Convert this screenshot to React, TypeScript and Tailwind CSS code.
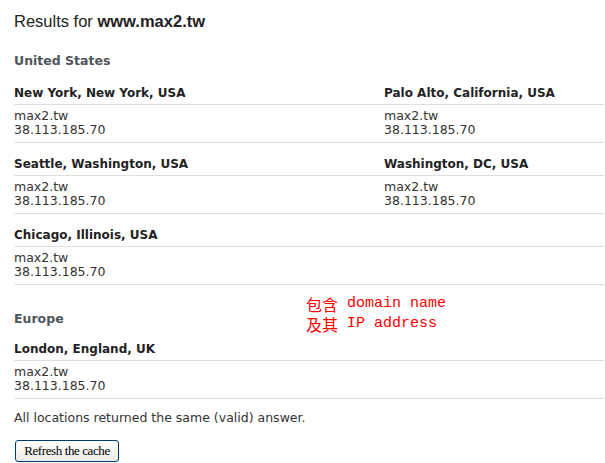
import React from "react";

type Location = { place: string; host: string; ip: string };

const usLocations: Location[] = [
  { place: "New York, New York, USA", host: "max2.tw", ip: "38.113.185.70" },
  { place: "Palo Alto, California, USA", host: "max2.tw", ip: "38.113.185.70" },
  { place: "Seattle, Washington, USA", host: "max2.tw", ip: "38.113.185.70" },
  { place: "Washington, DC, USA", host: "max2.tw", ip: "38.113.185.70" },
  { place: "Chicago, Illinois, USA", host: "max2.tw", ip: "38.113.185.70" },
];

const euLocations: Location[] = [
  { place: "London, England, UK", host: "max2.tw", ip: "38.113.185.70" },
];

function LocationCell({ loc }: { loc: Location }) {
  return (
    <div>
      <h4 className="pt-[13px] pb-[3px] border-b border-[#dedede] text-[12px] leading-[16px] font-bold text-[#222]">
        {loc.place}
      </h4>
      <div className="pt-[4px] pb-[5px] border-b border-[#dedede] text-[12.5px] leading-[14px] text-[#333]">
        <div>{loc.host}</div>
        <div>{loc.ip}</div>
      </div>
    </div>
  );
}

function LocationGrid({ items }: { items: Location[] }) {
  return (
    <div className="grid grid-cols-[370px_1fr]">
      {items.map((loc) => (
        <LocationCell key={loc.place} loc={loc} />
      ))}
      {items.length % 2 === 1 && (
        <div className="flex flex-col">
          <div className="h-[33px] border-b border-[#dedede]" />
          <div className="flex-1 border-b border-[#dedede]" />
        </div>
      )}
    </div>
  );
}

export default function App() {
  return (
    <div className="relative w-[605px] h-[463px] overflow-hidden bg-white pl-[14px] pr-px pt-[11px] font-['DejaVu_Sans',sans-serif]">
      <h1 className="font-['Liberation_Sans',Arial,sans-serif] text-[16.5px] leading-[20px] text-[#222]">
        Results for <span className="font-bold">www.max2.tw</span>
      </h1>

      <h3 className="mt-[21px] mb-[2px] text-[12.5px] leading-[18px] font-bold text-[#50555a]">
        United States
      </h3>
      <LocationGrid items={usLocations} />

      <h3 className="mt-[25px] text-[12.5px] leading-[18px] font-bold text-[#50555a]">
        Europe
      </h3>
      <LocationGrid items={euLocations} />

      <p className="mt-[12px] text-[12.5px] leading-[14px] text-[#333]">
        All locations returned the same (valid) answer.
      </p>

      <button className="mt-[15px] ml-px w-[104px] h-[22px] rounded-[3px] border border-[#003c74] bg-gradient-to-b from-white to-[#ecebe6] font-['Liberation_Serif',serif] text-[13px] leading-[18px] tracking-[-0.4px] text-black">
        Refresh the cache
      </button>

      {/* annotation drawn over the page */}
      <div className="absolute left-[306px] top-[294px] text-[#ff0000]">
        <div className="flex h-[20px] items-center whitespace-pre">
          <span className="font-['Noto_Sans_CJK_TC',sans-serif] text-[16px] leading-[20px]">包含</span>
          <span className="font-['Liberation_Mono',monospace] text-[15px] leading-[20px]"> domain name</span>
        </div>
        <div className="flex h-[20px] items-center whitespace-pre">
          <span className="font-['Noto_Sans_CJK_TC',sans-serif] text-[16px] leading-[20px]">及其</span>
          <span className="font-['Liberation_Mono',monospace] text-[15px] leading-[20px]"> IP address</span>
        </div>
      </div>
    </div>
  );
}
